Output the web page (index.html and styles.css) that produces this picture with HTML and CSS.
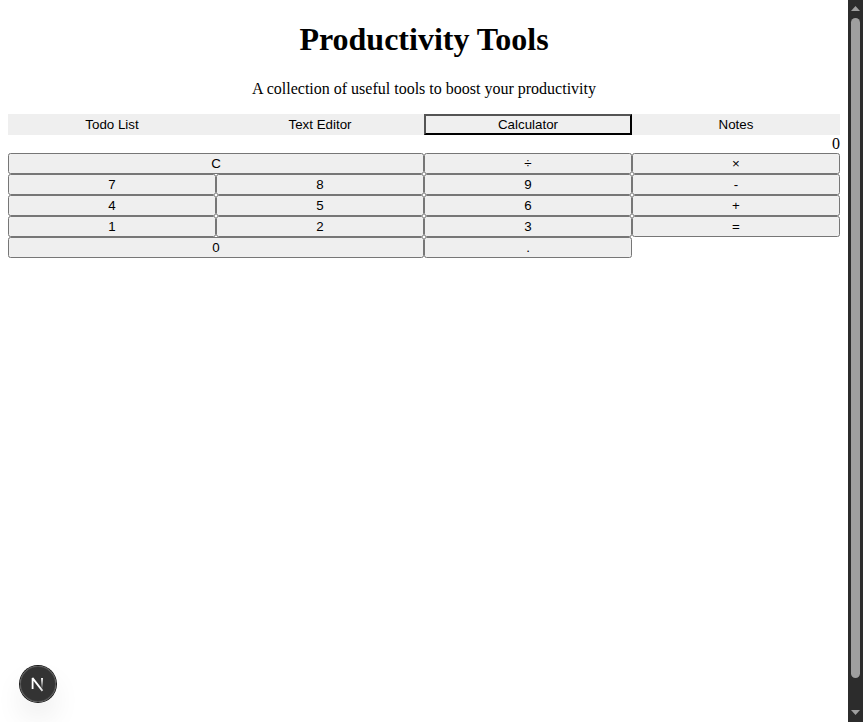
FILE: index.html
```html
<!DOCTYPE html>
<html lang="en">
<head>
<meta charset="utf-8">
<title>Productivity Tools</title>
<link rel="stylesheet" href="styles.css">
</head>
<body>
<main class="page">
  <header class="header">
    <h1>Productivity Tools</h1>
    <p>A collection of useful tools to boost your productivity</p>
  </header>
  <nav class="tabs">
    <button class="tab">Todo List</button>
    <button class="tab">Text Editor</button>
    <button class="tab active">Calculator</button>
    <button class="tab">Notes</button>
  </nav>
  <section class="calculator">
    <div class="display">0</div>
    <div class="keys">
      <button class="wide">C</button>
      <button>÷</button>
      <button>×</button>
      <button>7</button>
      <button>8</button>
      <button>9</button>
      <button>-</button>
      <button>4</button>
      <button>5</button>
      <button>6</button>
      <button>+</button>
      <button>1</button>
      <button>2</button>
      <button>3</button>
      <button>=</button>
      <button class="wide">0</button>
      <button>.</button>
    </div>
  </section>
</main>
<div class="scrollbar">
  <svg class="arrow" width="15" height="18" viewBox="0 0 15 18"><path d="M7.5 6 L12 11 H3 Z" fill="#9f9f9f"/></svg>
  <div class="thumb"></div>
  <svg class="arrow" width="15" height="18" viewBox="0 0 15 18"><path d="M3 6 H12 L7.5 11 Z" fill="#9f9f9f"/></svg>
</div>
<div class="dev-badge">
  <svg width="36" height="36" viewBox="0 0 36 36" fill="none">
    <defs>
      <linearGradient id="diagonal" gradientUnits="userSpaceOnUse" x1="9.955" y1="11.13" x2="15.16" y2="17.96">
        <stop stop-color="#fff"/>
        <stop offset="0.6" stop-color="#fff" stop-opacity="0.8"/>
        <stop offset="1" stop-color="#fff" stop-opacity="0"/>
      </linearGradient>
      <linearGradient id="stem" gradientUnits="userSpaceOnUse" x1="11.82" y1="1.5" x2="11.82" y2="13">
        <stop stop-color="#fff"/>
        <stop offset="1" stop-color="#fff" stop-opacity="0"/>
      </linearGradient>
    </defs>
    <g transform="translate(10.5 11.2) scale(0.9)" stroke-width="2" stroke-linejoin="bevel">
      <path d="M13.3 15.2 L2.34 1 V13.1" stroke="url(#diagonal)"/>
      <path d="M12.8 1 V13.1" stroke="url(#stem)"/>
    </g>
  </svg>
</div>
</body>
</html>
```
FILE: styles.css
```css
body {
  display: flex;
  height: 100vh;
  margin: 0;
  overflow: hidden;
  background: #fff;
  color: #000;
  font-family: "Liberation Serif", "Times New Roman", serif;
  font-size: 16px;
}

.page {
  flex: 1;
  padding: 0 8px;
}

.header {
  text-align: center;
}

h1 {
  margin: 21.44px 0;
  font-size: 32px;
}

p {
  margin: 16px 0;
}

button {
  font-family: "Liberation Sans", Arial, sans-serif;
  font-size: 13.3333px;
}

.tabs,
.keys {
  display: grid;
  grid-template-columns: repeat(4, 1fr);
}

.tab {
  border: 2px solid transparent;
  background: #efefef;
  color: #000;
}

.tab.active {
  border: 2px outset #000;
}

.display {
  text-align: right;
}

.wide {
  grid-column: span 2;
}

.scrollbar {
  display: flex;
  flex-direction: column;
  align-items: center;
  width: 15px;
  background: #2c2c2c;
}

.arrow {
  display: block;
  flex: none;
}

.thumb {
  width: 9px;
  height: 660px;
  margin-bottom: auto;
  border-radius: 5px;
  background: #9f9f9f;
}

.dev-badge {
  position: fixed;
  left: 20px;
  bottom: 20px;
  width: 36px;
  height: 36px;
  border-radius: 50%;
  background: rgba(0, 0, 0, 0.8);
  box-shadow: 0 0 0 1px #171717, inset 0 0 0 1px rgba(255, 255, 255, 0.14),
    0 16px 32px -8px rgba(0, 0, 0, 0.24);
}

.dev-badge svg {
  display: block;
}
```
